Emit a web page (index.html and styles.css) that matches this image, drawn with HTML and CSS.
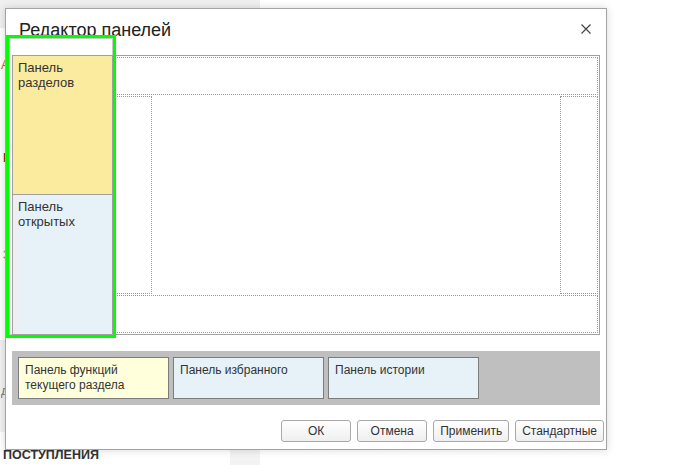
FILE: index.html
```html
<!DOCTYPE html>
<html lang="ru">
  <head>
    <title>Редактор панелей</title>
    <meta charset="UTF-8" />
    <meta name="viewport" content="width=device-width, initial-scale=1.0" />
    <link rel="stylesheet" href="styles.css">
  </head>
  <body>
    <!-- страница под окном -->
    <div class="page">
      <div class="nav-head"></div>
      <div class="nav-item nav-orange nav-first">А</div>
      <div class="nav-item nav-brown">П</div>
      <div class="nav-item nav-orange nav-third">З</div>
      <div class="nav-block">
        <span class="nav-gray">д</span>
      </div>
      <div class="section-row">
        <span class="section-title">ПОСТУПЛЕНИЯ</span>
        <span class="section-tail"></span>
      </div>
    </div>

    <!-- окно редактора -->
    <div class="dialog">
      <div class="dialog-head">
        <h1>Редактор панелей</h1>
        <button class="close" title="Закрыть">
          <svg width="10" height="10" viewBox="0 0 10 10">
            <path d="M0.5 0.5 L9.5 9.5 M9.5 0.5 L0.5 9.5" stroke="#444" stroke-width="1.2" fill="none" />
          </svg>
        </button>
      </div>

      <!-- схема размещения панелей -->
      <div class="editor">
        <div class="zone zone-top"></div>
        <div class="zone-middle">
          <div class="zone zone-left"></div>
          <div class="zone-center"></div>
          <div class="zone zone-right"></div>
        </div>
        <div class="zone zone-bottom"></div>
      </div>

      <!-- перетаскиваемая группа панелей -->
      <div class="drag">
        <div class="stack">
          <div class="panel panel-yellow">Панель<br />разделов</div>
          <div class="panel panel-blue">Панель<br />открытых</div>
        </div>
      </div>

      <!-- неразмещенные панели -->
      <div class="tray">
        <div class="tray-item tray-yellow">Панель функций<br />текущего раздела</div>
        <div class="tray-item">Панель избранного</div>
        <div class="tray-item">Панель истории</div>
      </div>

      <div class="actions">
        <button class="btn">ОК</button>
        <button class="btn">Отмена</button>
        <button class="btn">Применить</button>
        <button class="btn">Стандартные</button>
      </div>
    </div>
  </body>
</html>
```

FILE: styles.css
```css
html,
body {
  height: 100%;
  overflow: hidden;
}
body {
  margin: 0;
  font-family: "Liberation Sans", Arial, sans-serif;
  color: #333;
  background: #fff;
}

/* фон страницы */
.page {
  width: 260px;
}
.nav-head {
  height: 28px;
  background: #f0f0f0;
}
.nav-item {
  font-size: 13px;
  line-height: 16px;
  padding-left: 1px;
}
.nav-first {
  margin-top: 29px;
}
.nav-orange {
  color: #d2691e;
}
.nav-brown {
  color: #8b3a0e;
  font-weight: bold;
  margin-top: 77px;
  padding-left: 3px;
}
.nav-third {
  margin-top: 81px;
  padding-left: 3px;
}
.nav-block {
  margin-top: 77px;
  height: 92px;
  background: #f2f2f2;
  box-sizing: border-box;
  padding-top: 43px;
  font-size: 13px;
  line-height: 16px;
}
.nav-gray {
  color: #777;
  padding-left: 1px;
}
.section-row {
  display: flex;
  margin-top: 16px;
  height: 20px;
}
.section-title {
  font-size: 12.5px;
  font-weight: bold;
  line-height: 14px;
  padding-left: 3px;
  color: #333;
}
.section-tail {
  margin-left: auto;
  width: 30px;
  background: #f3f3f3;
}

/* окно */
.dialog {
  position: absolute;
  left: 5px;
  top: 8px;
  width: 602px;
  box-sizing: border-box;
  background: #fff;
  border: 1px solid #a3a3a3;
  box-shadow: 0 0 8px rgba(0, 0, 0, 0.16);
  padding-bottom: 7px;
}
.dialog-head {
  display: flex;
  align-items: center;
  padding: 10px 12px 0 13px;
  height: 22px;
}
.dialog-head h1 {
  margin: 0;
  font-size: 18px;
  font-weight: normal;
  line-height: 22px;
  color: #222;
}
.close {
  margin-left: auto;
  width: 16px;
  height: 16px;
  padding: 3px;
  border: none;
  background: none;
  margin-top: -2px;
}
.close svg {
  display: block;
}

.editor {
  margin: 14px 6px 0 4px;
  height: 280px;
  box-sizing: border-box;
  border: 1px solid #a0a0a0;
  padding: 1px;
  display: flex;
  flex-direction: column;
  gap: 1px;
}
.zone {
  border: 1px dotted #999;
  box-sizing: border-box;
}
.zone-top,
.zone-bottom {
  height: 38px;
}
.zone-middle {
  height: 198px;
  display: flex;
}
.zone-left {
  width: 140px;
}
.zone-center {
  flex: 1;
}
.zone-right {
  width: 38px;
}

/* выделенная группа */
.drag {
  position: absolute;
  left: 0;
  top: 26px;
  width: 110px;
  height: 303px;
  box-sizing: border-box;
  border: 3px solid #00ff00;
  box-shadow: inset 0 0 0 1px #c8c8c8;
  background: #fff;
  padding: 17px 0 0 3px;
}
.stack {
  height: 280px;
  box-sizing: border-box;
  border: 1px solid #a0a0a0;
  display: flex;
  flex-direction: column;
}
.panel {
  font-size: 13px;
  line-height: 15px;
  padding: 4px 5px;
  color: #333;
}
.panel-yellow {
  height: 139px;
  box-sizing: border-box;
  background: #fbeb9f;
  border-bottom: 1px solid #a0a0a0;
}
.panel-blue {
  flex: 1;
  background: linear-gradient(to right, #eceff3 8px, #e6f1f8 8px);
}

.tray {
  margin: 16px 6px 0 6px;
  width: 588px;
  box-sizing: border-box;
  background: #bfbfbf;
  padding: 6px;
  display: flex;
  gap: 4px;
}
.tray-item {
  width: 151px;
  height: 42px;
  box-sizing: border-box;
  border: 1px solid #7c7c7c;
  background: #e6f1f8;
  padding: 5px 6px;
  font-size: 12px;
  line-height: 15px;
  color: #333;
}
.tray-yellow {
  background: #ffffdc;
}

.actions {
  margin-top: 15px;
  display: flex;
  justify-content: flex-end;
  gap: 6px;
  padding-right: 2px;
}
.btn {
  height: 22px;
  min-width: 70px;
  padding: 0 6px;
  border: 1px solid #a9a9a9;
  border-radius: 3px;
  background: linear-gradient(#ffffff, #efefef);
  font-family: "Liberation Sans", Arial, sans-serif;
  font-size: 12px;
  color: #333;
  cursor: pointer;
}
.btn:hover {
  background: #f5f5f5;
}
```
